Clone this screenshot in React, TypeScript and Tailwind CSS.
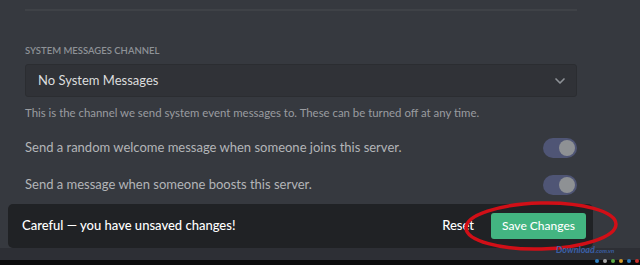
import { ChevronDown } from 'lucide-react';

function Toggle() {
  return (
    <div className="relative h-[20px] w-[34px] shrink-0 rounded-full bg-[#4f5575]">
      <div className="absolute right-[2px] top-[2px] h-[16px] w-[16px] rounded-full bg-[#8e9194]" />
    </div>
  );
}

export default function App() {
  return (
    <div
      className="relative flex h-[265px] w-[640px] flex-col overflow-hidden bg-[#36393f]"
      style={{ fontFamily: 'Lato, "Open Sans", sans-serif' }}
    >
      <div className="flex w-[577px] flex-col pl-[25px]">
        <div className="mt-[9px] h-[2px] bg-[#3f4247]" />

        <div className="mt-[34px] text-[9.5px] font-semibold uppercase leading-[12px] text-[#8e9297]">
          System Messages Channel
        </div>

        <div className="mt-[7px] flex h-[33px] items-center justify-between rounded-[3px] border border-[#2b2d31] bg-[#303237] pl-[12px] pr-[8px]">
          <span className="text-[13px] text-[#dcddde]">No System Messages</span>
          <ChevronDown size={16} strokeWidth={2.5} className="text-[#8e9297]" />
        </div>

        <p className="mt-[9px] text-[11.4px] leading-[14px] text-[#9a9ca0]">
          This is the channel we send system event messages to. These can be turned off at any time.
        </p>

        <div className="mt-[18px] flex h-[20px] items-center justify-between">
          <span className="text-[13px] text-[#b3b5b8]">Send a random welcome message when someone joins this server.</span>
          <Toggle />
        </div>

        <div className="mt-[17px] flex h-[20px] items-center justify-between">
          <span className="text-[13px] text-[#b3b5b8]">Send a message when someone boosts this server.</span>
          <Toggle />
        </div>
      </div>

      <div className="ml-[8px] mt-[9px] flex h-[44px] w-[585px] items-center justify-between rounded-[5px] bg-[#202225] pl-[14px] pr-[7px]">
        <span className="text-[13px] font-medium text-white">Careful — you have unsaved changes!</span>
        <div className="flex items-center gap-[17px]">
          <span className="text-[13px] font-medium text-white">Reset</span>
          <button className="h-[26px] w-[95px] rounded-[3px] bg-[#43b581] text-[12px] font-medium text-white">
            Save Changes
          </button>
        </div>
      </div>

      <div className="flex-1 bg-[#2d2f35]" />
      <div className="h-[5px] bg-[#0b0b0c]" />

      <svg className="absolute left-[462px] top-[200px]" width="158" height="54" viewBox="0 0 158 54">
        <ellipse
          cx="79"
          cy="26"
          rx="75"
          ry="23"
          fill="none"
          stroke="#d10f17"
          strokeWidth="3.5"
          transform="rotate(-1.5 79 26)"
        />
      </svg>

      <div className="absolute left-[556px] top-[245px] text-[9px] font-bold italic leading-[10px] text-[#3a5fa6]">
        Download<span className="text-[6px]">.com.vn</span>
      </div>
      <div className="absolute left-[595px] top-[259px] flex gap-[4px]">
        <span className="h-[4px] w-[4px] rounded-full bg-[#2e7fc0]" />
        <span className="h-[4px] w-[4px] rounded-full bg-[#a8a8a8]" />
        <span className="h-[4px] w-[4px] rounded-full bg-[#5aa845]" />
        <span className="h-[4px] w-[4px] rounded-full bg-[#d39a2a]" />
        <span className="h-[4px] w-[4px] rounded-full bg-[#2e7fc0]" />
        <span className="h-[4px] w-[4px] rounded-full bg-[#c8302c]" />
      </div>
    </div>
  );
}
